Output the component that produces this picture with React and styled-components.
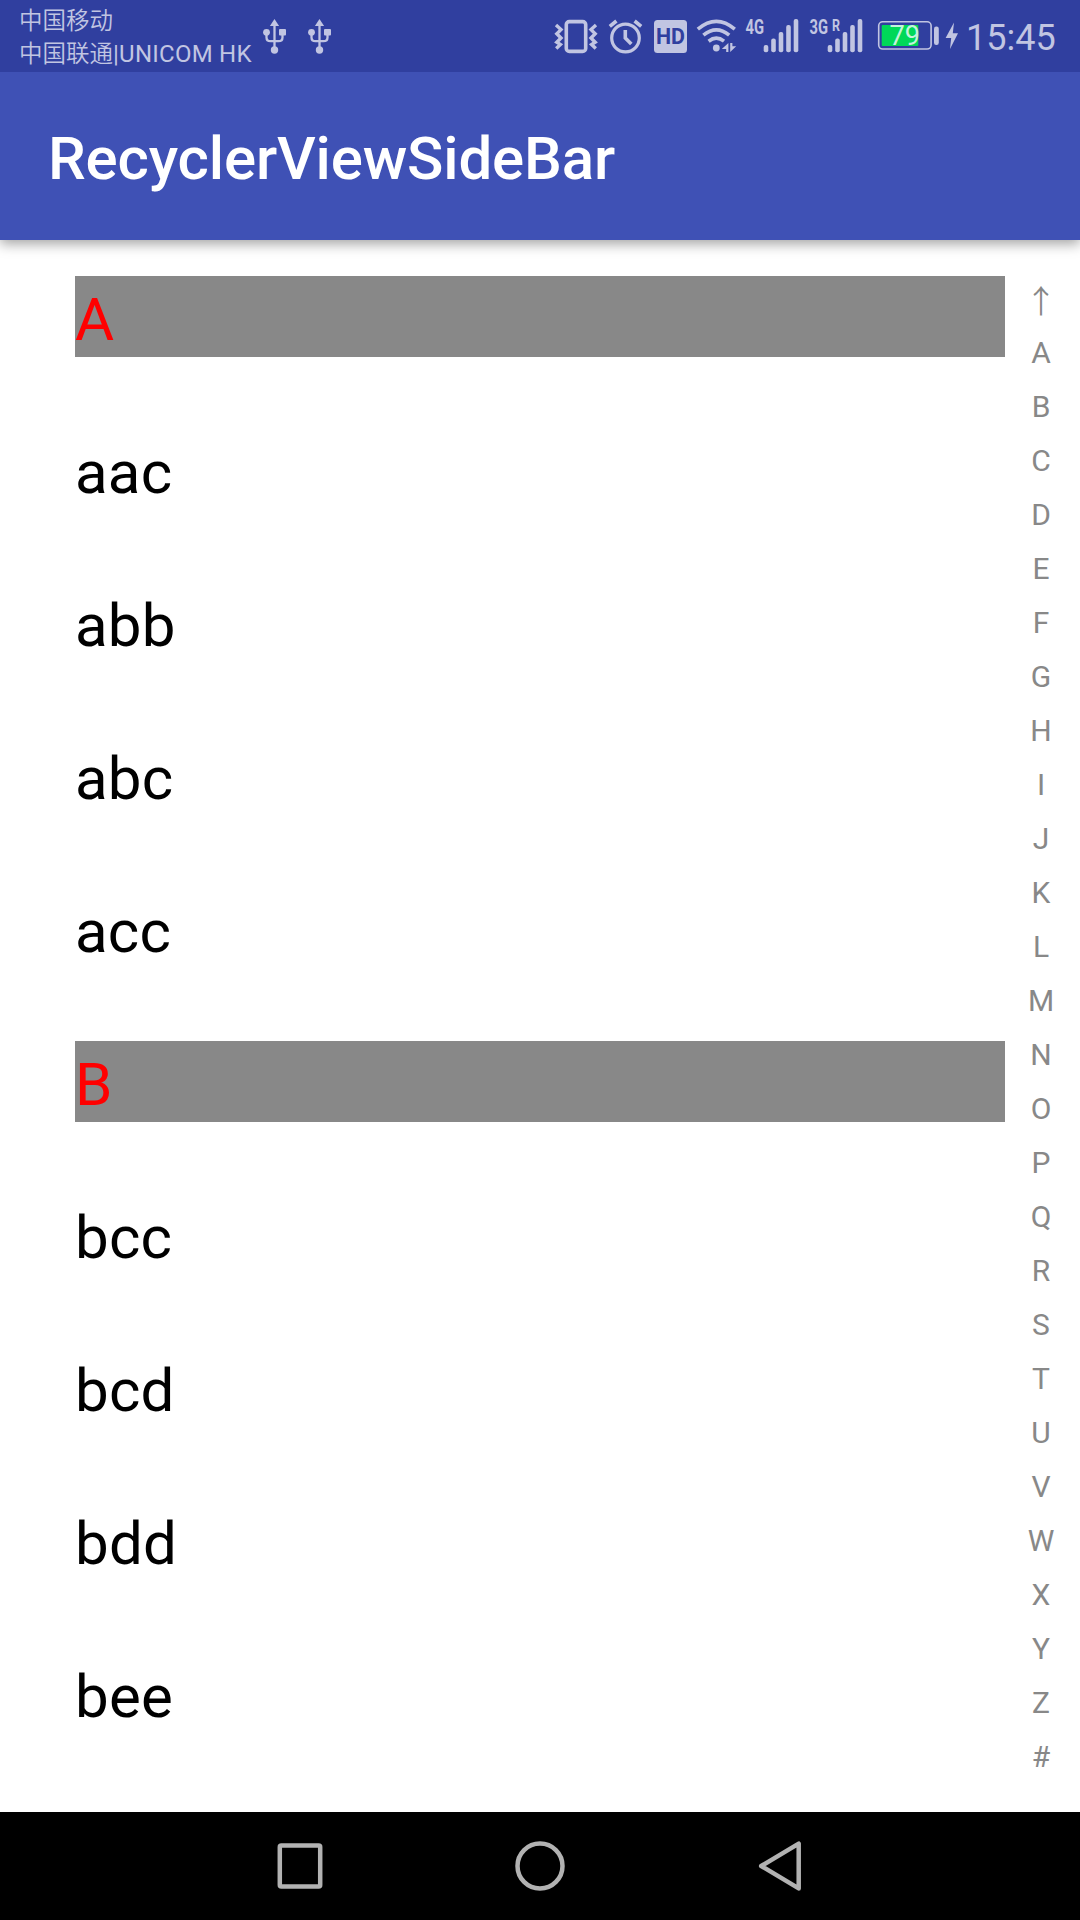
import React from "react";
import styled, { createGlobalStyle } from "styled-components";

const TINT = "#c1c5e2";
const PRIMARY_DARK = "#303f9f";

const GlobalStyle = createGlobalStyle`
  * { box-sizing: border-box; }
  body {
    margin: 0;
    background: #fff;
    font-family: Roboto, "Noto Sans CJK SC", sans-serif;
  }
`;

const Screen = styled.div`
  width: 1080px;
  height: 1920px;
  display: flex;
  flex-direction: column;
  overflow: hidden;
  background: #fff;
`;

const StatusBar = styled.header`
  flex: none;
  z-index: 2;
  height: 72px;
  display: flex;
  background: ${PRIMARY_DARK};
  color: ${TINT};
`;

const Carriers = styled.div`
  width: 263px;
  padding: 5px 0 0 19px;
  line-height: 33px;
  white-space: nowrap;
`;

const Carrier = styled.div`
  height: 33px;
  font-family: Roboto, "Noto Sans CJK SC", sans-serif;
  font-size: 23.5px;
  font-weight: 350;
`;

const Latin = styled.span`
  font-size: 24px;
  font-weight: 400;
  letter-spacing: 0.25px;
`;

const StatusIcon = styled.svg`
  flex: none;
  display: block;
  width: ${(p) => p.$w}px;
  height: 72px;
  margin-left: ${(p) => p.$gap || 0}px;
  overflow: visible;
`;

const Clock = styled.div`
  margin-left: 8px;
  font-size: 36px;
  line-height: 76px;
`;

const AppBar = styled.div`
  flex: none;
  height: 168px;
  padding: 6px 48px 0;
  display: flex;
  align-items: center;
  background: #3f51b5;
  color: #fff;
  box-shadow: 0 4px 12px rgba(0, 0, 0, 0.36);
  z-index: 1;
`;

const Title = styled.h1`
  margin: 0;
  font-size: 60px;
  font-weight: 500;
  line-height: 70px;
  letter-spacing: -0.15px;
`;

const Content = styled.main`
  flex: 1;
  min-height: 0;
  display: flex;
`;

const List = styled.ul`
  flex: none;
  width: 1005px;
  margin: 0;
  padding: 36px 0 0 75px;
  list-style: none;
  display: flex;
  flex-direction: column;
  gap: 72px;
`;

const Row = styled.li`
  flex: none;
  height: 81px;
  font-size: 60px;
  line-height: 87px;
  letter-spacing: 0.2px;
  color: ${(p) => (p.$header ? "#ff0000" : "#000")};
  background: ${(p) => (p.$header ? "#888888" : "transparent")};
`;

const SideBar = styled.nav`
  width: 72px;
  padding-top: 32px;
  display: flex;
  flex-direction: column;
  align-items: center;
  color: #888;
  font-size: 30px;
`;

const Letter = styled.span`
  flex: none;
  height: 54px;
  line-height: 54px;
`;

const TopArrow = styled(Letter)`
  font-family: "Noto Sans CJK SC", sans-serif;
  font-size: 32px;
  font-weight: 350;
`;

const NavBar = styled.footer`
  flex: none;
  height: 108px;
  display: flex;
  justify-content: center;
  align-items: center;
  gap: 180px;
  background: #000;
`;

const NavIcon = styled.svg`
  width: 60px;
  height: 60px;
  fill: none;
  stroke: #b2b2b2;
  stroke-width: 4.5;
  stroke-linejoin: round;
`;

const Usb = ({ gap }) => (
  <StatusIcon $w={23} $gap={gap} viewBox="263 0 23 72" fill={TINT}>
    <path d="M274.5 19l4.6 7h-9.2z" />
    <circle cx="274.5" cy="50" r="3.7" />
    <circle cx="266.5" cy="32.3" r="3.4" />
    <rect x="279" y="29" width="7" height="6.6" rx="1" />
    <path
      d="M274.5 24v24M266.5 33v4.5q0 3.7 4 3.7h8q4 0 4-3.7V33"
      fill="none"
      stroke={TINT}
      strokeWidth="2.3"
    />
  </StatusIcon>
);

const Vibrate = () => (
  <StatusIcon $w={42} $gap={224} viewBox="555 0 42 72" fill="none" stroke={TINT} strokeWidth="3.4">
    <rect x="566.3" y="21.6" width="19.4" height="29.8" rx="3" strokeWidth="3.6" />
    <path d="M556 25l5 4.6-4.2 4.2 4.2 4.2-4.2 4.2 3.6 2.3-4.2 4M596 25l-5 4.6 4.2 4.2-4.2 4.2 4.2 4.2-3.6 2.3 4.2 4" />
  </StatusIcon>
);

const Alarm = () => (
  <StatusIcon $w={33} $gap={12} viewBox="609 0 33 72" fill="none" stroke={TINT} strokeWidth="3.2">
    <circle cx="625.5" cy="38" r="13.8" />
    <path d="M609.8 26.4l6.6-5.4M641.2 26.4l-6.6-5.4" strokeWidth="3.6" />
    <path d="M625.3 30v8l6 6" strokeWidth="3.6" />
  </StatusIcon>
);

const Hd = () => (
  <StatusIcon $w={33} $gap={12} viewBox="654 0 33 72">
    <rect x="654" y="20" width="33" height="33" rx="3.5" fill={TINT} />
    <text x="656" y="44" fontSize="21.5" fontWeight="700" fill={PRIMARY_DARK} textLength="29" lengthAdjust="spacingAndGlyphs">
      HD
    </text>
  </StatusIcon>
);

const Wifi = () => (
  <StatusIcon $w={39} $gap={10} viewBox="697 0 39 72" fill="none" stroke={TINT} strokeWidth="3.6">
    <path d="M697.8 29.2q18.6-15.6 37 0" />
    <path d="M703.4 35.2q13-10.8 25.8 0" />
    <path d="M708.6 41.2q7.8-6 15.4 0" />
    <circle cx="716.3" cy="48" r="3.4" fill={TINT} stroke="none" />
    <path d="M728.4 43v9h-2.2v-3h-4.4zM730.2 52v-9h2.2v3.2h3.8z" fill={TINT} stroke="none" />
  </StatusIcon>
);

const BARS = [
  [0, 45],
  [7.5, 38.5],
  [15, 32],
  [22.5, 25],
  [30, 19],
];

const Signal = ({ gap, x, barX, label, labelWidth, roaming }) => (
  <StatusIcon $w={52} $gap={gap} viewBox={`${x} 0 52 72`} fill={TINT}>
    <text x={x - 0.5} y="34" fontSize="20.5" fontWeight="700" textLength={labelWidth} lengthAdjust="spacingAndGlyphs">
      {label}
    </text>
    {roaming && (
      <text x={x + 22} y="31" fontSize="17" fontWeight="700" textLength="8" lengthAdjust="spacingAndGlyphs">
        R
      </text>
    )}
    {BARS.map(([dx, top]) => (
      <rect key={dx} x={barX + dx} y={top} width="4.6" height={52.2 - top} rx="2" />
    ))}
  </StatusIcon>
);

const Battery = () => (
  <StatusIcon $w={61} $gap={16} viewBox="878 0 61 72">
    <rect x="878.7" y="21.8" width="52.4" height="27.2" rx="4" fill="none" stroke={TINT} strokeWidth="1.6" />
    <rect x="881.7" y="25" width="36.6" height="21" rx="1" fill="#00d858" />
    <rect x="934" y="26.5" width="4.8" height="18.5" rx="2.2" fill={TINT} />
    <text x="889.5" y="45" fontSize="27" fill="#c4f2dc" textLength="30.5" lengthAdjust="spacingAndGlyphs">
      79
    </text>
  </StatusIcon>
);

const Bolt = () => (
  <StatusIcon $w={12} $gap={7} viewBox="946 0 12 72" fill={TINT}>
    <path d="M954 22.5L945.6 38h5.6L950 49l8-15.8h-5.2z" />
  </StatusIcon>
);

const ROWS = ["A", "aac", "abb", "abc", "acc", "B", "bcc", "bcd", "bdd", "bee"];
const LETTERS = [..."ABCDEFGHIJKLMNOPQRSTUVWXYZ#"];

export default function App() {
  return (
    <>
      <GlobalStyle />
      <Screen>
        <StatusBar>
          <Carriers>
            <Carrier>中国移动</Carrier>
            <Carrier>
              中国联通<Latin>|UNICOM HK</Latin>
            </Carrier>
          </Carriers>
          <Usb />
          <Usb gap={22} />
          <Vibrate />
          <Alarm />
          <Hd />
          <Wifi />
          <Signal gap={10} x={746} barX={763.7} label="4G" labelWidth={18.5} />
          <Signal gap={12} x={810} barX={827.7} label="3G" labelWidth={18.5} roaming />
          <Battery />
          <Bolt />
          <Clock>15:45</Clock>
        </StatusBar>
        <AppBar>
          <Title>RecyclerViewSideBar</Title>
        </AppBar>
        <Content>
          <List>
            {ROWS.map((text) => (
              <Row key={text} $header={text.length === 1}>
                {text}
              </Row>
            ))}
          </List>
          <SideBar>
            <TopArrow>↑</TopArrow>
            {LETTERS.map((letter) => (
              <Letter key={letter}>{letter}</Letter>
            ))}
          </SideBar>
        </Content>
        <NavBar>
          <NavIcon viewBox="270 1836 60 60">
            <rect x="279.8" y="1845.6" width="40.4" height="40.8" rx="1.5" />
          </NavIcon>
          <NavIcon viewBox="510 1836 60 60">
            <circle cx="540" cy="1866" r="22.5" />
          </NavIcon>
          <NavIcon viewBox="750 1836 60 60">
            <path d="M798.7 1843.6v44.8L761.2 1866z" />
          </NavIcon>
        </NavBar>
      </Screen>
    </>
  );
}
